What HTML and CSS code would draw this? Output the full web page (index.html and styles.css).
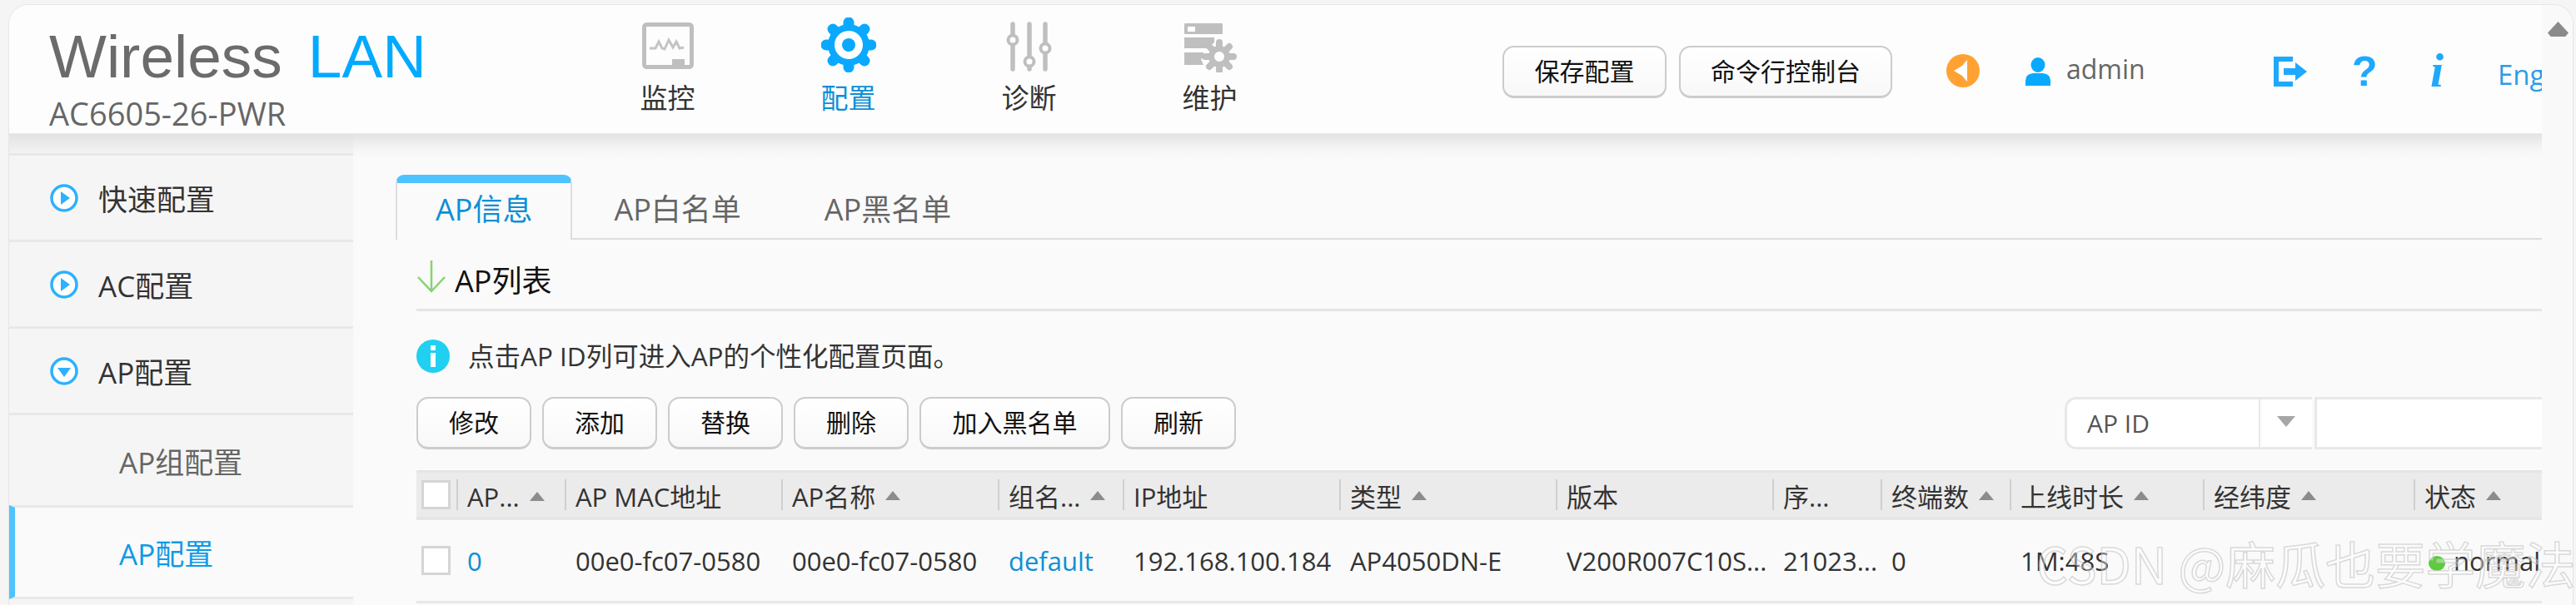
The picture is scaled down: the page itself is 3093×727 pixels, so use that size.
FILE: index.html
```html
<!DOCTYPE html>
<html lang="zh">

<head>
    <meta charset="UTF-8">
    <title>Wireless LAN AC6605-26-PWR</title>
    <link rel="stylesheet" href="styles.css">
</head>

<body>
    <div class="window">
        <div class="page">
            <header class="topbar">
                <div class="brand">
                    <div class="logo">Wireless<span class="logo-lan">LAN</span></div>
                    <div class="model">AC6605-26-PWR</div>
                </div>

                <nav class="nav">
                    <a class="nav-item">
                        <svg class="nav-icon" width="66" height="66" viewBox="0 0 66 66">
                            <rect x="4.5" y="8.5" width="57" height="51" rx="3" fill="none" stroke="#bfbfbf" stroke-width="5"/>
                            <rect x="38" y="50" width="15" height="9" fill="#bfbfbf"/>
                            <polyline points="11,37 18,37 22,29 26,37 29,38 34,27 39,36 43,29 47,37 52,36" fill="none" stroke="#c4c4c4" stroke-width="3"/>
                        </svg>
                        <span>监控</span>
                    </a>
                    <a class="nav-item active">
                        <svg class="nav-icon" width="66" height="66" viewBox="0 0 66 66">
                            <g stroke="#0aa9ff" stroke-width="13" stroke-linecap="round">
                                <line x1="33" y1="6" x2="33" y2="60"/>
                                <line x1="6" y1="33" x2="60" y2="33"/>
                                <line x1="14" y1="14" x2="52" y2="52"/>
                                <line x1="14" y1="52" x2="52" y2="14"/>
                            </g>
                            <circle cx="33" cy="33" r="25" fill="#0aa9ff"/>
                            <circle cx="33" cy="33" r="17" fill="#fff"/>
                            <circle cx="33" cy="33" r="8" fill="#0aa9ff"/>
                        </svg>
                        <span>配置</span>
                    </a>
                    <a class="nav-item">
                        <svg class="nav-icon" width="66" height="66" viewBox="0 0 66 66">
                            <g stroke="#bfbfbf" stroke-width="5.5" stroke-linecap="round" fill="#fff">
                                <line x1="13" y1="8" x2="13" y2="62"/>
                                <line x1="33" y1="8" x2="33" y2="62"/>
                                <line x1="52" y1="8" x2="52" y2="62"/>
                                <circle cx="13" cy="27" r="5.5" stroke-width="4"/>
                                <circle cx="33" cy="53" r="5.5" stroke-width="4"/>
                                <circle cx="52" cy="37" r="5.5" stroke-width="4"/>
                            </g>
                        </svg>
                        <span>诊断</span>
                    </a>
                    <a class="nav-item">
                        <svg class="nav-icon" width="66" height="66" viewBox="0 0 66 66">
                            <rect x="2" y="7" width="46" height="13" rx="1" fill="#bfbfbf"/>
                            <rect x="6" y="11" width="9" height="6" fill="#fff"/>
                            <polygon points="2,24 38,24 38,30 30,37 2,37" fill="#bfbfbf"/>
                            <polygon points="2,42 25,42 25,47 22,50 25,57 2,57" fill="#bfbfbf"/>
                            <g stroke="#bfbfbf" stroke-width="8" stroke-linecap="round">
                                <line x1="44" y1="30" x2="44" y2="64"/>
                                <line x1="27" y1="47" x2="61" y2="47"/>
                                <line x1="32" y1="35" x2="56" y2="59"/>
                                <line x1="32" y1="59" x2="56" y2="35"/>
                            </g>
                            <circle cx="44" cy="47" r="13" fill="#bfbfbf"/>
                            <circle cx="44" cy="47" r="6" fill="#fff"/>
                        </svg>
                        <span>维护</span>
                    </a>
                </nav>

                <div class="actions">
                    <button class="btn btn-save">保存配置</button>
                    <button class="btn btn-cli">命令行控制台</button>
                </div>

                <svg class="speaker" width="40" height="40" viewBox="0 0 40 40">
                    <circle cx="20" cy="20" r="20" fill="#ffa233"/>
                    <polygon points="9,20 19,14 25,7 25,33 19,26" fill="#fff"/>
                </svg>
                <svg class="user-icon" width="32" height="34" viewBox="0 0 32 34">
                    <ellipse cx="16" cy="9" rx="8.5" ry="9" fill="#0aa9ff"/>
                    <path d="M1 34 V28 Q1 20 10 19 H22 Q31 20 31 28 V34 Z" fill="#0aa9ff"/>
                </svg>
                <span class="username">admin</span>
                <svg class="exit-icon" width="41" height="36" viewBox="0 0 41 36">
                    <path d="M23 3 H3 V33 H23" fill="none" stroke="#1ea9ff" stroke-width="6"/>
                    <polygon points="12,14 26,14 26,7 40,18 26,29 26,22 12,22" fill="#1ea9ff"/>
                </svg>
                <span class="help">?</span>
                <span class="about">i</span>
                <span class="lang">Eng</span>
            </header>

            <div class="content">
                <aside class="sidebar">
                    <div class="menu-item">
                        <svg class="menu-icon" width="34" height="34" viewBox="0 0 34 34">
                            <circle cx="17" cy="17" r="15" fill="#fff" stroke="#2db1ff" stroke-width="3.5"/>
                            <polygon points="13,9 24,17 13,25" fill="#2db1ff"/>
                        </svg>
                        快速配置
                    </div>
                    <div class="menu-item">
                        <svg class="menu-icon" width="34" height="34" viewBox="0 0 34 34">
                            <circle cx="17" cy="17" r="15" fill="#fff" stroke="#2db1ff" stroke-width="3.5"/>
                            <polygon points="13,9 24,17 13,25" fill="#2db1ff"/>
                        </svg>
                        AC配置
                    </div>
                    <div class="menu-item">
                        <svg class="menu-icon" width="34" height="34" viewBox="0 0 34 34">
                            <circle cx="17" cy="17" r="15" fill="#fff" stroke="#2db1ff" stroke-width="3.5"/>
                            <polygon points="9,13 25,13 17,24" fill="#2db1ff"/>
                        </svg>
                        AP配置
                    </div>
                    <div class="menu-sub">AP组配置</div>
                    <div class="menu-sub current">AP配置</div>
                </aside>

                <main class="main">
                    <div class="tabs">
                        <div class="tab active">AP信息</div>
                        <div class="tab">AP白名单</div>
                        <div class="tab">AP黑名单</div>
                    </div>

                    <div class="section-title">
                        <svg width="36" height="40" viewBox="0 0 36 40">
                            <path d="M18 1 V37 M2 21 L18 38 L34 21" fill="none" stroke="#86d36e" stroke-width="2.5"/>
                        </svg>
                        <span>AP列表</span>
                    </div>

                    <div class="notice">
                        <svg width="40" height="40" viewBox="0 0 40 40">
                            <circle cx="20" cy="20" r="20" fill="#1fd0f0"/>
                            <rect x="17" y="7" width="6" height="6" fill="#fff"/>
                            <rect x="17" y="16" width="6" height="17" fill="#fff"/>
                        </svg>
                        <span>点击AP ID列可进入AP的个性化配置页面。</span>
                    </div>

                    <div class="toolbar">
                        <button class="btn btn-sm">修改</button>
                        <button class="btn btn-sm">添加</button>
                        <button class="btn btn-sm">替换</button>
                        <button class="btn btn-sm">删除</button>
                        <button class="btn btn-wide">加入黑名单</button>
                        <button class="btn btn-sm">刷新</button>
                        <div class="search">
                            <div class="search-select">
                                <span class="search-value">AP ID</span>
                                <span class="search-arrow"></span>
                            </div>
                            <div class="search-input"></div>
                        </div>
                    </div>

                    <table class="ap-table">
                        <colgroup>
                            <col class="col-check">
                            <col class="col-s">
                            <col class="col-l">
                            <col class="col-l">
                            <col class="col-m">
                            <col class="col-l">
                            <col class="col-l">
                            <col class="col-l">
                            <col class="col-s">
                            <col class="col-clients">
                            <col class="col-uptime">
                            <col class="col-geo">
                            <col class="col-state">
                        </colgroup>
                        <thead>
                            <tr>
                                <th class="cell-check"><span class="checkbox"></span></th>
                                <th><span class="th-text">AP...</span><i class="sort"></i></th>
                                <th><span class="th-text">AP MAC地址</span></th>
                                <th><span class="th-text">AP名称</span><i class="sort"></i></th>
                                <th><span class="th-text">组名...</span><i class="sort"></i></th>
                                <th><span class="th-text">IP地址</span></th>
                                <th><span class="th-text">类型</span><i class="sort"></i></th>
                                <th><span class="th-text">版本</span></th>
                                <th><span class="th-text">序...</span></th>
                                <th><span class="th-text">终端数</span><i class="sort"></i></th>
                                <th><span class="th-text">上线时长</span><i class="sort"></i></th>
                                <th><span class="th-text">经纬度</span><i class="sort"></i></th>
                                <th><span class="th-text">状态</span><i class="sort"></i></th>
                            </tr>
                        </thead>
                        <tbody>
                            <tr>
                                <td class="cell-check"><span class="checkbox"></span></td>
                                <td><a class="link">0</a></td>
                                <td>00e0-fc07-0580</td>
                                <td>00e0-fc07-0580</td>
                                <td><a class="link">default</a></td>
                                <td>192.168.100.184</td>
                                <td>AP4050DN-E</td>
                                <td>V200R007C10S...</td>
                                <td>21023...</td>
                                <td>0</td>
                                <td>1M:48S</td>
                                <td></td>
                                <td class="cell-state"><i class="dot"></i>normal</td>
                            </tr>
                        </tbody>
                    </table>
                </main>
            </div>
        </div>

        <div class="rail"><span class="rail-thumb"></span></div>
    </div>

    <div class="watermark">CSDN @麻瓜也要学魔法</div>
</body>

</html>
```

FILE: styles.css
```css
body {
    margin: 0;
    height: 727px;
    overflow: hidden;
    position: relative;
    background-color: #f5f5f5;
    font-family: "Open Sans", "Noto Sans CJK SC", sans-serif;
    color: #333333;
}

.window {
    display: flex;
    height: 722px;
    margin: 5px 3px 0 10px;
    border: 1px solid #e6e6e6;
    border-bottom: 0;
    border-radius: 24px 24px 0 0;
    background-color: #fdfdfd;
    overflow: hidden;
    box-sizing: border-box;
}

.page {
    width: 3041px;
    flex: none;
    overflow: hidden;
}

.rail {
    flex: 1;
    background-color: #f9f9f9;
    padding-top: 20px;
}

.rail-thumb {
    display: block;
    width: 25px;
    height: 18px;
    margin-left: 7px;
    background-color: #8a8a8a;
    clip-path: polygon(50% 0, 100% 75%, 85% 100%, 15% 100%, 0 75%);
}

/* top bar */
.topbar {
    display: flex;
    align-items: flex-start;
    height: 154px;
    background-color: #fdfdfd;
}

.brand {
    width: 682px;
    flex: none;
    padding-left: 48px;
    box-sizing: border-box;
}

.logo {
    margin-top: 24px;
    font-family: "Liberation Sans", sans-serif;
    font-size: 73px;
    line-height: 76px;
    color: #6b6b6b;
}

.logo-lan {
    margin-left: 31px;
    color: #00aaff;
}

.model {
    margin-top: 9px;
    font-size: 38px;
    line-height: 42px;
    color: #666666;
}

.nav {
    display: flex;
    flex: none;
}

.nav-item {
    display: flex;
    flex-direction: column;
    align-items: center;
    width: 217px;
    font-size: 33px;
    line-height: 40px;
    color: #333333;
}

.nav-icon {
    margin-top: 15px;
    margin-bottom: 11px;
}

.nav-item.active {
    color: #0d8fd6;
}

.actions {
    display: flex;
    gap: 15px;
    margin-left: 243px;
    margin-top: 49px;
}

.btn {
    height: 63px;
    padding: 0;
    border: 2px solid #cccccc;
    border-bottom-width: 3px;
    border-radius: 14px;
    background: linear-gradient(#ffffff, #f8f8f8);
    font-family: inherit;
    font-size: 30px;
    line-height: 40px;
    color: #111111;
    box-sizing: border-box;
    flex: none;
}

.btn-save {
    width: 197px;
}

.btn-cli {
    width: 256px;
}

.speaker {
    margin-left: 65px;
    margin-top: 59px;
    flex: none;
}

.user-icon {
    margin-left: 54px;
    margin-top: 63px;
    flex: none;
}

.username {
    margin-left: 18px;
    margin-top: 55px;
    width: 249px;
    flex: none;
    font-size: 32px;
    line-height: 44px;
    color: #666666;
}

.exit-icon {
    margin-top: 62px;
    flex: none;
}

.help {
    margin-left: 53px;
    margin-top: 50px;
    width: 94px;
    flex: none;
    font-family: "Liberation Sans", sans-serif;
    font-size: 50px;
    font-weight: bold;
    line-height: 60px;
    color: #1ea9ff;
}

.about {
    width: 81px;
    margin-top: 48px;
    flex: none;
    font-family: "Liberation Serif", serif;
    font-size: 58px;
    font-style: italic;
    font-weight: bold;
    line-height: 62px;
    color: #1ea9ff;
}

.lang {
    margin-top: 62px;
    flex: none;
    font-size: 33px;
    line-height: 44px;
    color: #2a9de8;
}

/* sidebar and main */
.content {
    display: flex;
    height: 568px;
}

.sidebar {
    width: 413px;
    flex: none;
    padding-top: 23px;
    background: linear-gradient(#e2e2e2, #f3f3f3 23px, #f5f5f5 23px);
    border-top: 1px solid #ebebeb;
    box-sizing: border-box;
}

.menu-item,
.menu-sub {
    display: flex;
    align-items: center;
    border-top: 3px solid #e8e8e8;
    box-sizing: border-box;
    font-size: 35px;
    color: #333333;
}

.menu-item {
    height: 104px;
    padding-left: 49px;
}

.menu-icon {
    margin-right: 24px;
}

.menu-sub {
    height: 111px;
    padding-left: 132px;
    color: #666666;
}

.menu-sub.current {
    height: 113px;
    padding-left: 125px;
    border-left: 7px solid #4fc3ff;
    border-bottom: 3px solid #e8e8e8;
    background-color: #fafafa;
    color: #0d9be8;
}

.main {
    flex: 1;
    min-width: 0;
    padding: 49px 0 0 76px;
    background: linear-gradient(#e3e3e3, #f5f5f5 18px, #fafafa 28px);
    border-top: 1px solid #ebebeb;
}

.tabs {
    display: flex;
    height: 78px;
    margin-left: -25px;
    border-bottom: 2px solid #dddddd;
    box-sizing: border-box;
}

.tab {
    padding: 10px 50px 0;
    font-size: 36px;
    line-height: 64px;
    color: #666666;
}

.tab.active {
    height: 78px;
    margin-right: 0;
    padding: 0 46px;
    border: 2px solid #dddddd;
    border-top: 10px solid #4fc3ff;
    border-bottom: 0;
    border-radius: 10px 10px 0 0;
    background-color: #fafafa;
    color: #0d8fd6;
    box-sizing: border-box;
}

.section-title {
    display: flex;
    align-items: flex-end;
    gap: 10px;
    height: 64px;
    padding-bottom: 13px;
    border-bottom: 3px solid #e5e5e5;
    box-sizing: border-box;
    margin-top: 22px;
    font-size: 36px;
    line-height: 40px;
    color: #111111;
}

.section-title svg {
    margin-bottom: 6px;
}

.notice {
    display: flex;
    align-items: center;
    gap: 22px;
    margin-top: 34px;
    font-size: 31.5px;
    line-height: 40px;
}

.toolbar {
    display: flex;
    gap: 13px;
    margin-top: 29px;
}

.btn-sm {
    width: 138px;
}

.btn-wide {
    width: 229px;
}

.search {
    display: flex;
    margin-left: auto;
    height: 63px;
}

.search-select {
    display: flex;
    width: 297px;
    border: 3px solid #e8e8e8;
    border-right: 0;
    border-radius: 14px 0 0 14px;
    background-color: #ffffff;
    box-sizing: border-box;
}

.search-value {
    width: 232px;
    padding-left: 24px;
    border-right: 2px solid #e8e8e8;
    box-sizing: border-box;
    font-size: 30px;
    line-height: 58px;
    color: #555555;
}

.search-arrow {
    width: 0;
    height: 0;
    margin: 20px 0 0 20px;
    border-style: solid;
    border-width: 13px 11px 0;
    border-color: #a6a6a6 transparent transparent;
}

.search-input {
    width: 273px;
    margin-left: 3px;
    border: 3px solid #e8e8e8;
    border-right: 0;
    background-color: #ffffff;
    box-sizing: border-box;
}

.ap-table {
    width: 2553px;
    margin-top: 25px;
    table-layout: fixed;
    border-collapse: collapse;
}

.col-check { width: 48px; }
.col-s { width: 130px; }
.col-m { width: 150px; }
.col-l { width: 260px; }
.col-clients { width: 155px; }
.col-uptime { width: 232px; }
.col-geo { width: 253px; }
.col-state { width: 155px; }

.ap-table th {
    height: 53px;
    padding: 0 0 0 13px;
    background-color: #ebebeb;
    background-clip: padding-box;
    border-top: 3px solid #e5e5e5;
    border-bottom: 4px solid #e5e5e5;
    text-align: left;
    font-weight: normal;
    font-size: 31px;
    white-space: nowrap;
    overflow: hidden;
    position: relative;
}

.ap-table th + th::before {
    content: "";
    position: absolute;
    left: 0;
    top: 8px;
    bottom: 8px;
    width: 2px;
    background-color: #cfcfcf;
}

.ap-table th.cell-check,
.ap-table td.cell-check {
    padding: 0 0 0 6px;
}

.th-text {
    vertical-align: middle;
}

.sort {
    display: inline-block;
    width: 0;
    height: 0;
    margin-left: 12px;
    vertical-align: middle;
    border-style: solid;
    border-width: 0 9px 11px;
    border-color: transparent transparent #8c8c8c;
}

.checkbox {
    display: block;
    width: 35px;
    height: 35px;
    border: 3px solid #d5d5d5;
    background-color: #ffffff;
    box-sizing: border-box;
}

.ap-table td {
    height: 97px;
    padding: 0 0 0 13px;
    border-bottom: 3px solid #e8e8e8;
    font-size: 31px;
    white-space: nowrap;
    overflow: hidden;
}

.link {
    color: #0d8fd6;
}

.ap-table .cell-state {
    padding-left: 18px;
    overflow: hidden;
}

.dot {
    display: inline-block;
    width: 20px;
    height: 18px;
    margin-right: 10px;
    border-radius: 50%;
    background-color: #5ccc3c;
}

.watermark {
    position: absolute;
    left: 2445px;
    top: 636px;
    font-family: "Noto Sans CJK SC", sans-serif;
    font-size: 60px;
    line-height: 80px;
    white-space: nowrap;
    color: rgba(255, 255, 255, 0.35);
    -webkit-text-stroke: 1.5px rgba(190, 190, 190, 0.55);
}
```
